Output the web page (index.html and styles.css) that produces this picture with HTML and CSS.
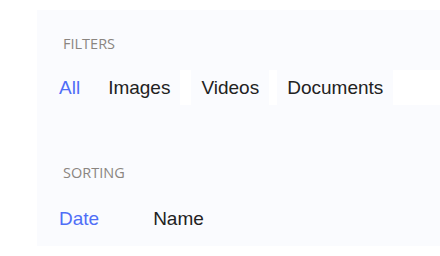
FILE: index.html
```html
<!DOCTYPE html>
<html lang="en">
<head>
  <meta charset="UTF-8" />
  <title>Filters</title>
  <link rel="stylesheet" href="styles.css">
</head>
<body>

<div class="panel">
  <div class="section filters">
    <div class="section-title">FILTERS</div>
    <div class="tab-row">
      <div class="tab-group">
        <span class="tab active">All</span>
        <span class="tab">Images</span>
      </div>
      <div class="tab-group extra">
        <span class="tab filled">Videos</span>
        <span class="tab filled">Documents</span>
      </div>
    </div>
  </div>

  <div class="section sorting">
    <div class="section-title">SORTING</div>
    <div class="sort-row">
      <span class="tab active">Date</span>
      <span class="tab">Name</span>
    </div>
  </div>
</div>

</body>
</html>
```

FILE: styles.css
```css
* { box-sizing: border-box; }
body {
  margin: 0;
  background: #fff;
  font-family: 'Liberation Sans', Arial, sans-serif;
}

.panel {
  margin: 10px 0 11px 37px;
  padding: 24px 0 10px 12px;
  background: #fafbfe;
}

.section-title {
  padding-left: 14px;
  font-family: 'Open Sans', sans-serif;
  font-size: 14.5px;
  line-height: 20px;
  color: #8a8580;
}

.tab-row {
  display: flex;
  margin-top: 16px;
}

.tab-group {
  display: flex;
  gap: 8px;
}

.tab-group.extra {
  flex: 1;
  padding-left: 11px;
  background: #fff;
}

.tab {
  height: 35px;
  padding: 0 10px;
  font-size: 19px;
  line-height: 35px;
  color: #222;
  white-space: nowrap;
}

.tab.filled {
  background: #fafbfe;
}

.tab.active {
  color: #4f6ef7;
}

.sorting {
  margin-top: 58px;
}

.sort-row {
  display: flex;
  gap: 34px;
  margin-top: 18px;
}
```
